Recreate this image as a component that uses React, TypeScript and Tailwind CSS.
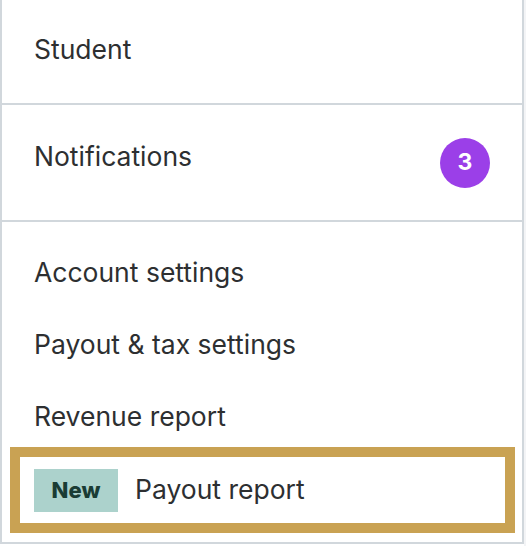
// Account dropdown menu section with a highlighted "Payout report" entry

const font = { fontFamily: 'Inter, "Noto Sans", sans-serif' }

function MenuItem({ label }: { label: string }) {
  return (
    <div className="flex h-[72px] items-center px-8 text-[26.5px] text-[#2d2f31]">
      {label}
    </div>
  )
}

export default function App() {
  return (
    <div className="flex h-[546px] w-[526px] bg-white" style={font}>
      <div className="flex h-[544px] w-[524px] flex-col border-x-2 border-b-2 border-[#d1d7dc]">
        {/* Profile row */}
        <div className="flex h-[103px] items-center px-8 pb-[3px] text-[26.5px] text-[#2d2f31]">
          Student
        </div>

        {/* Notifications */}
        <div className="flex h-[117px] items-center justify-between border-t-2 border-[#d1d7dc] px-8">
          <span className="mb-[11px] text-[26.5px] text-[#2d2f31]">Notifications</span>
          <span className="flex h-[50px] w-[50px] items-center justify-center rounded-full bg-[#9b3fe8] text-[23px] font-bold text-white">
            3
          </span>
        </div>

        {/* Settings links */}
        <div className="flex flex-1 flex-col border-t-2 border-[#d1d7dc] pt-[15px]">
          <MenuItem label="Account settings" />
          <MenuItem label="Payout & tax settings" />
          <MenuItem label="Revenue report" />
          <div className="ml-2 mr-[7px] mt-[-6px] flex h-[86px] items-center gap-[17px] border-[10px] border-[#c9a253] pl-[14px]">
            <span className="flex h-[43px] w-[84px] items-center justify-center bg-[#acd2cc] text-[22px] font-extrabold text-[#1a3c34]">
              New
            </span>
            <span className="text-[26.5px] text-[#2d2f31]">Payout report</span>
          </div>
        </div>
      </div>
      <div className="h-full flex-1 bg-[#f3f4f6]" />
    </div>
  )
}
